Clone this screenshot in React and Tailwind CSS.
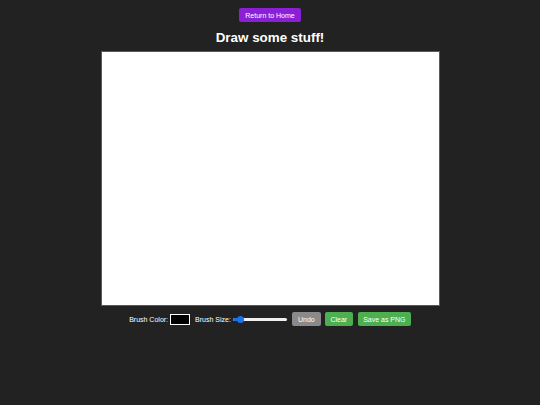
import React from 'react'

const App = () => {
  return (
    <div className="min-h-[405px] w-full bg-[#222222] flex flex-col items-center text-white" style={{ fontFamily: '"Liberation Sans", Arial, sans-serif' }}>
      <button className="mt-[8px] h-[14px] px-[6px] bg-[#8a1fd6] text-white text-[7px] rounded-[2px] leading-none">
        Return to Home
      </button>

      <h1 className="mt-[9px] text-[13.4px] font-bold leading-none">Draw some stuff!</h1>

      <div className="mt-[7px] w-[339px] h-[255px] bg-white border border-[#5a5a5a]" />

      <div className="mt-[6px] flex items-center text-[7px] leading-none">
        <span>Brush Color:</span>
        <div className="ml-[2px] w-[20px] h-[11px] bg-black border-[1.5px] border-white" />
        <span className="ml-[5px]">Brush Size:</span>
        {/* slider */}
        <div className="relative ml-[2px] w-[54px] h-[8px] flex items-center">
          <div className="w-full h-[3px] rounded-full bg-[#efefef]" />
          <div className="absolute left-0 w-[8px] h-[3px] rounded-full bg-[#1a73e8]" />
          <div className="absolute left-[4px] w-[7px] h-[7px] rounded-full bg-[#1a73e8]" />
        </div>
        <button className="ml-[5px] h-[14px] w-[29px] bg-[#8a8a8a] text-white rounded-[2px]">Undo</button>
        <button className="ml-[4px] h-[14px] w-[28px] bg-[#4caf50] text-white rounded-[2px]">Clear</button>
        <button className="ml-[5px] h-[14px] w-[53px] bg-[#4caf50] text-white rounded-[2px]">Save as PNG</button>
      </div>
    </div>
  );
};

export default App;
